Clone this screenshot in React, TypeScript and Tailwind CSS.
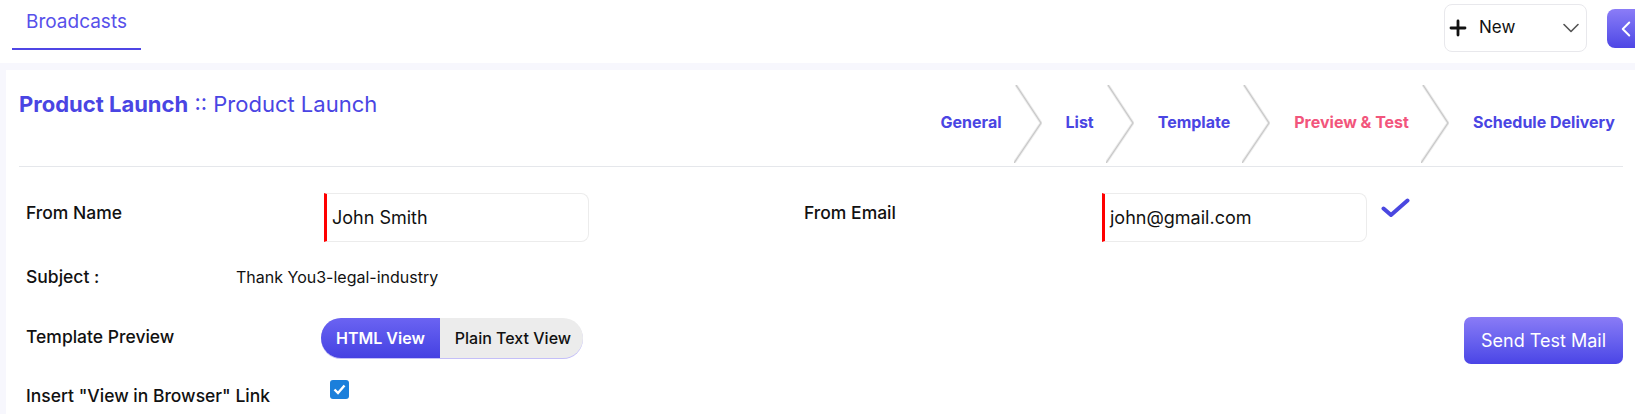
import { Fragment } from 'react'
import { ChevronDown, ChevronLeft, Plus } from 'lucide-react'

type Step = { label: string; active?: boolean }

const steps: Step[] = [
  { label: 'General' },
  { label: 'List' },
  { label: 'Template' },
  { label: 'Preview & Test', active: true },
  { label: 'Schedule Delivery' },
]

function StepArrow() {
  return (
    <svg width="28" height="78" viewBox="0 0 28 78" className="ml-3 mr-6 shrink-0">
      <polyline points="2,0 27,38 0,78" fill="none" stroke="#ececec" strokeWidth="3" />
      <polyline points="2,0 27,38 0,78" fill="none" stroke="#c8c8c8" strokeWidth="1.2" />
    </svg>
  )
}

function Stepper() {
  return (
    <div className="flex items-center pr-2">
      {steps.map((s, i) => (
        <Fragment key={s.label}>
          <span className={s.active ? 'mb-1 text-base font-bold text-[#f2557c]' : 'mb-1 text-base font-bold text-[#4a45e3]'}>{s.label}</span>
          {i < steps.length - 1 && <StepArrow />}
        </Fragment>
      ))}
    </div>
  )
}

function TextBox({ value }: { value: string }) {
  return (
    <div className="flex h-[49px] w-[265px] shrink-0 items-center rounded-r-lg border border-l-[3px] border-[#ececec] border-l-[#ff0000] bg-white pl-[5px] text-lg text-[#111]">
      {value}
    </div>
  )
}

export default function App() {
  return (
    <div className="min-h-screen w-full overflow-hidden bg-[#f7f7fd] font-['Inter','Noto_Sans',sans-serif] text-[#111]">
      <header className="flex h-[63px] items-start justify-between bg-white pl-3">
        <div className="box-border h-[50px] border-b-2 border-[#4f46e5] px-[14px] pt-[8px] text-[19px] leading-7 text-[#5750ea]">Broadcasts</div>
        <div className="flex items-start gap-5">
          <div className="mt-1 flex h-12 w-[143px] items-center rounded-lg border border-[#e8e8ec] bg-white pl-px pr-px">
            <Plus size={24} strokeWidth={2.8} className="text-[#111]" />
            <span className="ml-[9px] text-[17px]">New</span>
            <ChevronDown size={28} strokeWidth={1.4} className="ml-auto text-[#555]" />
          </div>
          <button className="-mr-3 mt-[9px] flex h-[39px] w-10 items-center rounded-lg bg-linear-to-b from-[#8b7cf7] to-[#4f46e5] pl-[6px] text-white">
            <ChevronLeft size={26} strokeWidth={1.8} />
          </button>
        </div>
      </header>

      <main className="ml-[6px] mt-[7px] min-h-[400px] bg-white pb-6 pl-[13px] pr-3 pt-[15px]">
        <div className="flex items-start justify-between">
          <h1 className="mt-1 text-[22px] leading-[30px] text-[#4a45e3]">
            <span className="font-bold">Product Launch</span> :: Product Launch
          </h1>
          <Stepper />
        </div>
        <div className="mt-[3px] h-px bg-[#e5e7eb]" />

        <div className="pl-[7px]">
          <div className="mt-[26px] flex items-start">
            <div className="w-[298px] shrink-0 pt-2 text-[17.5px] font-medium leading-6">From Name</div>
            <TextBox value="John Smith" />
            <div className="ml-[215px] w-[298px] shrink-0 pt-2 text-[17.5px] font-medium leading-6">From Email</div>
            <TextBox value="john@gmail.com" />
            <svg width="29" height="20" viewBox="0 0 29 20" className="ml-[14px] mt-[5px]">
              <path d="M2.5 10.5 L10 17 L26.5 2.5" fill="none" stroke="#4a47e0" strokeWidth="4" strokeLinecap="round" strokeLinejoin="round" />
            </svg>
          </div>

          <div className="mt-[23px] flex items-center leading-6">
            <div className="w-[210px] shrink-0 text-[17.5px] font-medium">Subject :</div>
            <div className="text-base">Thank You3-legal-industry</div>
          </div>

          <div className="mt-[28px] flex items-start">
            <div className="w-[295px] shrink-0 pt-2 text-[17.5px] font-medium leading-6">Template Preview</div>
            <div className="mt-px flex h-10 overflow-hidden rounded-full bg-[#ececec] text-base shadow-[0_1px_0_#c4bff8]">
              <button className="bg-linear-to-b from-[#6b63f2] to-[#4540e2] px-[15px] font-semibold text-white">HTML View</button>
              <button className="pl-[15px] pr-[12px] font-medium text-[#111]">Plain Text View</button>
            </div>
            <button className="ml-auto h-[47px] w-[159px] rounded-[7px] bg-linear-to-b from-[#8a7bf6] to-[#4b44e6] text-lg text-white">Send Test Mail</button>
          </div>

          <div className="mt-4 flex items-start">
            <div className="w-[304px] shrink-0 pt-1 text-[17.5px] font-medium leading-6">Insert "View in Browser" Link</div>
            <span className="flex h-[19px] w-[19px] items-center justify-center rounded-[3px] bg-[#1b7fdb]">
              <svg width="13" height="11" viewBox="0 0 13 11">
                <path d="M1.5 5.5 L5 9 L11.5 1.5" fill="none" stroke="white" strokeWidth="2.4" />
              </svg>
            </span>
          </div>
        </div>
      </main>
    </div>
  )
}
